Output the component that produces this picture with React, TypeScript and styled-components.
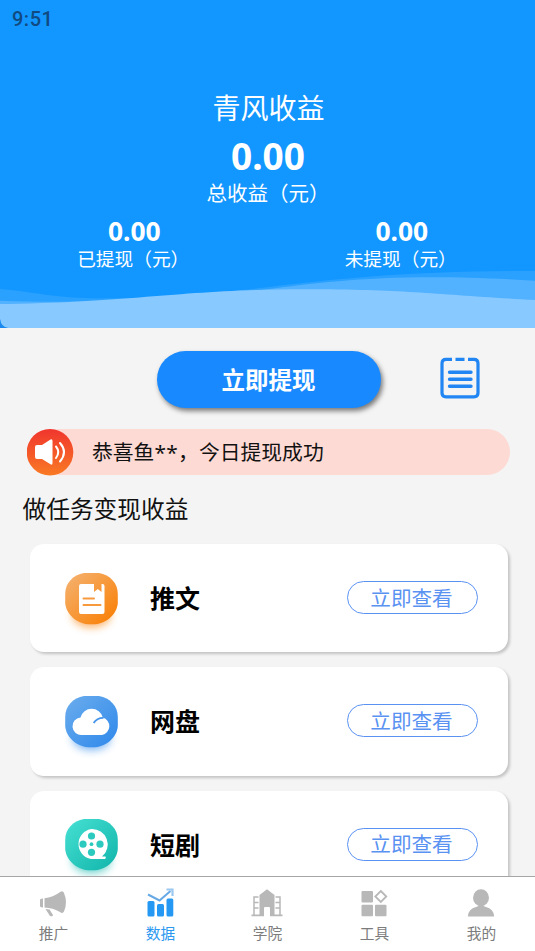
import React from 'react';
import styled, { createGlobalStyle } from 'styled-components';

const GlobalStyle = createGlobalStyle`
  * { box-sizing: border-box; }
  html, body { margin: 0; padding: 0; overflow: hidden; }
  body { font-family: 'Noto Sans CJK SC', sans-serif; background: #f4f4f4; }
  svg { display: block; }
`;

const Screen = styled.div`
  width: 535px;
  height: 951px;
  display: flex;
  flex-direction: column;
  background: #f4f4f4;
  color: #111;
  overflow: hidden;
`;

const Header = styled.header`
  position: relative;
  flex: none;
  height: 328px;
  background: #1296ff;
  color: #fff;
  display: flex;
  flex-direction: column;
  overflow: hidden;
`;

const StatusBar = styled.div`
  height: 38px;
  padding-left: 12px;
  font: 500 20px/38px Roboto, sans-serif;
  letter-spacing: 0.5px;
  color: #114a80;
`;

const AppTitle = styled.h1`
  margin: 49px 0 0;
  padding-left: 2px;
  font-size: 28px;
  line-height: 40px;
  font-weight: 400;
  text-align: center;
`;

const Amount = styled.div<{ $large?: boolean }>`
  font-family: 'Noto Sans', sans-serif;
  font-size: ${(p) => (p.$large ? 37 : 26.4)}px;
  line-height: ${(p) => (p.$large ? 58 : 30)}px;
  padding-left: 1px;
  font-weight: 700;
  text-align: center;
`;

const AmountLabel = styled.div<{ $large?: boolean }>`
  font-size: ${(p) => (p.$large ? 20.5 : 18.7)}px;
  line-height: ${(p) => (p.$large ? 14 : 24)}px;
  margin-left: ${(p) => (p.$large ? 1 : -1)}px;
  text-align: center;
`;

const Split = styled.div`
  display: grid;
  grid-template-columns: 1fr 1fr;
  margin-top: 17px;
`;

const Waves = styled.svg`
  position: absolute;
  left: 0;
  bottom: 0;
`;

const Main = styled.main`
  flex: 1;
  min-height: 0;
  overflow: hidden;
`;

const Actions = styled.div`
  display: flex;
  align-items: center;
  padding: 22.5px 56px 0 157px;
  justify-content: space-between;
`;

const WithdrawButton = styled.button`
  width: 224px;
  height: 57px;
  border: 0;
  padding: 1px 1px 0 0;
  border-radius: 29px;
  background: #1989ff;
  color: #fff;
  font: 700 23.5px/1 'Noto Sans CJK SC', sans-serif;
  box-shadow: 2px 3px 5px rgba(0, 0, 0, 0.5);
`;

const IconButton = styled.button`
  border: 0;
  padding: 0;
  margin: -3px -0.5px 0 0;
  background: none;
`;

const Notice = styled.div`
  display: flex;
  align-items: center;
  height: 46px;
  margin: 21.5px 25px 0 27px;
  border-radius: 23px;
  background: #fddad4;
  font-size: 20.8px;
`;

const NoticeText = styled.span`
  margin: -2px 0 0 18px;
  white-space: nowrap;
`;

const Mask = styled.span`
  font-family: 'Noto Sans', sans-serif;
  letter-spacing: 0.4px;
`;

const SectionTitle = styled.h2`
  margin: 13px 0 0 22.5px;
  height: 41px;
  font-size: 23.7px;
  line-height: 40px;
  font-weight: 400;
`;

const CardList = styled.div`
  display: flex;
  flex-direction: column;
  gap: 15px;
  padding: 15px 27px 0 30px;
`;

const Card = styled.section`
  flex: none;
  display: flex;
  align-items: center;
  height: 108.3px;
  padding: 0 30px 0 25px;
  border-radius: 14px;
  background: #fff;
  box-shadow: 2px 2px 3px rgba(0, 0, 0, 0.2);
`;

const CardName = styled.h3`
  flex: 1;
  margin: -2px 0 0 22px;
  color: #000;
  font-size: 25px;
  line-height: 36px;
  font-weight: 700;
`;

const ViewButton = styled.button`
  width: 131px;
  height: 33px;
  margin-top: -1px;
  padding: 0 2px 1px 0;
  border: 1px solid #5a92f2;
  border-radius: 17px;
  background: #fff;
  color: #5a92f2;
  font: 400 20.6px/1 'Noto Sans CJK SC', sans-serif;
`;

const TabBar = styled.nav`
  flex: none;
  display: grid;
  grid-template-columns: repeat(5, 1fr);
  height: 75px;
  border-top: 1px solid #a6a6a6;
  background: #fff;
`;

const Tab = styled.a<{ $active?: boolean }>`
  display: flex;
  flex-direction: column;
  align-items: center;
  padding-top: 9.5px;
  font-size: 14.7px;
  line-height: 24px;
  color: ${(p) => (p.$active ? '#2c98f0' : '#7c7c7c')};
`;

const TabArt = styled.svg`
  margin: 0 1px 1.5px 0;
`;

const NoteIcon = () => (
  <svg width="40" height="42" viewBox="0 0 40 42" fill="none" stroke="#2186f3">
    <path d="M12 2.300H6Q2 2.300 2 6.500V36Q2 39.800 6 39.800H34Q38 39.800 38 36V6.500Q38 2.300 34 2.300H28M15.500 2.300H24.500" strokeWidth="3.200" />
    <path d="M9.500 15.200H31M9.500 22.200H31M9.500 29.300H31" strokeWidth="3.400" strokeLinecap="round" />
  </svg>
);

const SpeakerIcon = () => (
  <svg width="47" height="47" viewBox="0 0 47 47">
    <defs>
      <linearGradient id="speaker" x1="0" y1="0" x2="0" y2="1">
        <stop offset="0" stopColor="#f0352e" />
        <stop offset="1" stopColor="#f97a24" />
      </linearGradient>
    </defs>
    <circle cx="23" cy="23.300" r="23.300" fill="url(#speaker)" />
    <path d="M10 16H15L23.500 10.500Q25.500 9.500 25.500 12V34Q25.500 36.500 23.500 35.300L15 30H10Q8 30 8 28V18Q8 16 10 16Z" fill="#fff" />
    <path d="M29 17.500Q33.500 23 29 29M33 14Q41 23 33 32.500" fill="none" stroke="#fff" strokeWidth="2" strokeLinecap="round" />
  </svg>
);

interface BadgeProps {
  id: string;
  from: string;
  to: string;
  children: React.ReactNode;
}

const BadgeArt = styled.svg`
  flex: none;
  margin-top: 9px;
  overflow: visible;
`;

const Badge = ({ id, from, to, children }: BadgeProps) => (
  <BadgeArt width="73" height="60" viewBox="-10 0 73 60">
    <defs>
      <linearGradient id={id} x1="0" y1="0" x2="1" y2="1">
        <stop offset="0.100" stopColor={from} />
        <stop offset="0.900" stopColor={to} />
      </linearGradient>
      <filter id={`${id}-glow`} x="-30%" y="-50%" width="160%" height="200%">
        <feGaussianBlur stdDeviation="4" />
      </filter>
    </defs>
    <ellipse cx="26.500" cy="42" rx="19" ry="12" fill={to} opacity="0.650" filter={`url(#${id}-glow)`} />
    <path d="M19 0H34C45 2 52.800 10 52.800 21V30C52 41 42 50 30 51.300H23C11 50 1 41 0.200 30V21C0.200 10 8 2 19 0Z" fill={`url(#${id})`} />
    {children}
  </BadgeArt>
);

const ArticleBadge = () => (
  <Badge id="article" from="#f5ae68" to="#f9820a">
    <path d="M16 11H29V19L32.800 16L36.500 19V11H37.500Q39.500 11 39.500 13V39Q39.500 41 37.500 41H16Q14 41 14 39V13Q14 11 16 11Z" fill="#fff" />
    <path d="M18.500 25.500H29M18.500 32H35.500" stroke="#f79a3d" strokeWidth="2" strokeLinecap="round" />
  </Badge>
);

const CloudBadge = () => (
  <Badge id="cloud" from="#65a9ed" to="#348ceb">
    <path d="M17 39A8.700 8.700 0 0 1 15.500 21.500A11.500 11.500 0 0 1 37.800 21.500A9 9 0 0 1 37 39Z" fill="#fff" />
    <path d="M28.700 27Q31.500 21.800 38.500 21.800" fill="none" stroke="#4695eb" strokeWidth="1.800" />
  </Badge>
);

const ReelBadge = () => (
  <Badge id="reel" from="#41dccf" to="#16b8ae">
    <path d="M26.500 10A15.500 15.500 0 0 1 37 37.500H40.500Q41.500 39 40 40H26A15.200 15.200 0 0 1 26.500 10Z" fill="#fff" />
    <g fill="#2bc9be">
      <circle cx="26.500" cy="17" r="3.600" />
      <circle cx="18" cy="25.200" r="3.600" />
      <circle cx="35" cy="25.200" r="3.600" />
      <circle cx="26.500" cy="33.300" r="3.600" />
      <circle cx="26.500" cy="25.200" r="1.900" />
    </g>
  </Badge>
);

const TabIcon = ({ children }: { children: React.ReactNode }) => (
  <TabArt width="34" height="33" viewBox="0 0 34 33" fill="#b8b8b8">
    {children}
  </TabArt>
);

const tabs = [
  {
    label: '推广',
    icon: (
      <path d="M4 12.500Q5 11.500 7 11.500V20.500Q5 20.500 4 19.500ZM8.500 11.300Q17 10.500 24.500 4.800Q27 3.500 28 6Q32 15.500 28 24.500Q26.500 27 24 25Q17 20.800 8.500 20.500ZM9.500 22L13.500 22.500L17 28Q17 29.800 14 29Z" />
    ),
  },
  {
    label: '数据',
    active: true,
    icon: (
      <>
        <rect x="4.500" y="14" width="7" height="15.500" rx="1.500" fill="#2598f3" />
        <rect x="14" y="17" width="7" height="12.500" rx="1.500" fill="#2598f3" />
        <rect x="23.500" y="11.500" width="6.800" height="18" rx="1.500" fill="#2598f3" />
        <path d="M5 7.500L16.500 13.500L27.500 4" fill="none" stroke="#66a9e5" strokeWidth="2" />
        <path d="M23.500 2.500H29.500V9" fill="none" stroke="#9ac8f0" strokeWidth="2.200" />
      </>
    ),
  },
  {
    label: '学院',
    icon: (
      <>
        <path fillRule="evenodd" d="M9.500 8L17 2.300L24.500 8V28H20V21Q20 20 19 20H15Q14 20 14 21V28H9.500Z" />
        <path d="M8.500 10H4V28.300M4 15.500H8.500M4 21H8.500M25.500 10H30V28.300M25.500 15.500H30M25.500 21H30" fill="none" stroke="#b8b8b8" strokeWidth="1.500" />
        <path d="M1.500 27.500H14V29.300H1.500ZM20 27.500H32.500V29.300H20Z" />
      </>
    ),
  },
  {
    label: '工具',
    icon: (
      <>
        <rect x="4.500" y="4" width="11.500" height="11.500" rx="1" />
        <rect x="4.500" y="17.700" width="11.500" height="11.500" rx="1" />
        <rect x="18" y="17.700" width="11.500" height="11.500" rx="1" />
        <path d="M23.800 4L29.300 9.500L23.800 15L18.300 9.500Z" fill="none" stroke="#b8b8b8" strokeWidth="1.800" />
      </>
    ),
  },
  {
    label: '我的',
    icon: (
      <>
        <ellipse cx="17" cy="10.800" rx="8" ry="8.500" />
        <path d="M3.800 29.500Q4.500 21.500 12 20L14.500 19V16H19.500V19L22 20Q29.500 21.500 30.200 29.500Z" />
      </>
    ),
  },
];

const cards = [
  { name: '推文', icon: <ArticleBadge /> },
  { name: '网盘', icon: <CloudBadge /> },
  { name: '短剧', icon: <ReelBadge /> },
];

export default function App() {
  return (
    <Screen>
      <GlobalStyle />
      <Header>
        <Waves width="535" height="60" viewBox="0 268 535 60">
          <path d="M0 289C35 292 50 297 85 298C170 300 210 293 265 287.500C330 279 420 270 535 271V328H0Z" fill="#2aa1ff" />
          <path d="M0 300.700C80 304 180 300 265 289.500C330 281 400 272 535 280.700V328H0Z" fill="#53b2ff" />
          <path d="M0 304C140 302 180 289.200 305 289.200C410 289.200 440 295 535 300V328H8Q1 327 0 319Z" fill="#88c9ff" />
          <path d="M0 319Q1 327 8 328H0Z" fill="#1989f0" />
        </Waves>
        <StatusBar>9:51</StatusBar>
        <AppTitle>青风收益</AppTitle>
        <Amount $large>0.00</Amount>
        <AmountLabel $large>总收益（元）</AmountLabel>
        <Split>
          <div>
            <Amount>0.00</Amount>
            <AmountLabel>已提现（元）</AmountLabel>
          </div>
          <div>
            <Amount>0.00</Amount>
            <AmountLabel>未提现（元）</AmountLabel>
          </div>
        </Split>
      </Header>
      <Main>
        <Actions>
          <WithdrawButton>立即提现</WithdrawButton>
          <IconButton><NoteIcon /></IconButton>
        </Actions>
        <Notice>
          <SpeakerIcon />
          <NoticeText>恭喜鱼<Mask>**</Mask>，今日提现成功</NoticeText>
        </Notice>
        <SectionTitle>做任务变现收益</SectionTitle>
        <CardList>
          {cards.map((c) => (
            <Card key={c.name}>
              {c.icon}
              <CardName>{c.name}</CardName>
              <ViewButton>立即查看</ViewButton>
            </Card>
          ))}
        </CardList>
      </Main>
      <TabBar>
        {tabs.map((t) => (
          <Tab key={t.label} $active={t.active}>
            <TabIcon>{t.icon}</TabIcon>
            {t.label}
          </Tab>
        ))}
      </TabBar>
    </Screen>
  );
}
